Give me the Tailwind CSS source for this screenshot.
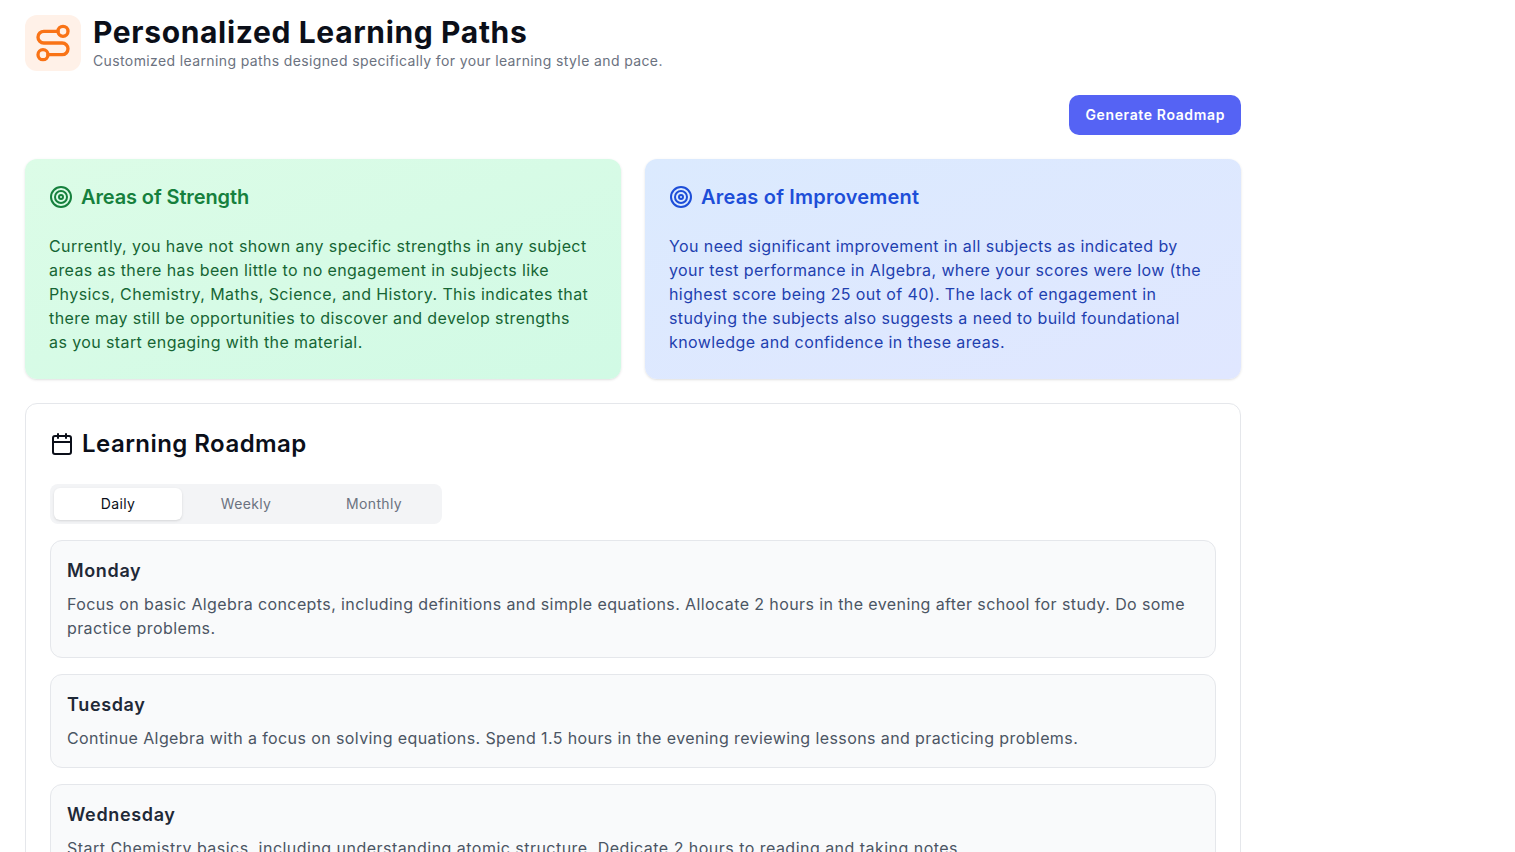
<!DOCTYPE html>
<html lang="en">
<head>
    <meta charset="utf-8">
    <title>Personalized Learning Paths</title>
    <script src="https://cdn.jsdelivr.net/npm/@tailwindcss/browser@4"></script>
</head>
<body class="bg-white h-[852px] overflow-hidden font-['Inter','Open_Sans',sans-serif]">
    <main class="w-[1266px] px-[25px] pt-[15px]">
        <header class="flex items-center gap-3">
            <div class="w-14 h-14 rounded-xl bg-[#fff1e8] flex items-center justify-center text-[#f97316]">
                <svg class="w-10 h-10" viewBox="0 0 24 24" fill="none" stroke="currentColor" stroke-width="2" stroke-linecap="round" stroke-linejoin="round"><circle cx="6" cy="19" r="3"/><path d="M9 19h8.5a3.5 3.5 0 0 0 0-7h-11a3.5 3.5 0 0 1 0-7H15"/><circle cx="18" cy="5" r="3"/></svg>
            </div>
            <div>
                <h1 class="text-[30px] leading-9 font-bold tracking-[0.65px] text-[#0b0f19] -mt-px">Personalized Learning Paths</h1>
                <p class="text-sm leading-5 tracking-[0.38px] text-[#6b7280] mt-px">Customized learning paths designed specifically for your learning style and pace.</p>
            </div>
        </header>

        <div class="flex justify-end mt-6">
            <button class="h-10 px-4 rounded-[10px] bg-[#5563f4] text-white text-sm font-semibold tracking-[0.63px]">Generate Roadmap</button>
        </div>

        <section class="grid grid-cols-2 gap-6 mt-6">
            <div class="h-[220px] rounded-xl bg-linear-to-br from-[#dcfce7] to-[#d1fae5] p-6 shadow-sm">
                <h2 class="flex items-center gap-2 h-7 mb-[23px] text-xl font-semibold tracking-[-0.12px] text-[#15803d]">
                    <svg class="w-6 h-6" viewBox="0 0 24 24" fill="none" stroke="currentColor" stroke-width="2" stroke-linecap="round" stroke-linejoin="round"><circle cx="12" cy="12" r="10"/><circle cx="12" cy="12" r="6"/><circle cx="12" cy="12" r="2"/></svg>
                    Areas of Strength
                </h2>
                <p class="max-w-[541px] text-[#166534] leading-6 tracking-[0.4px]">Currently, you have not shown any specific strengths in any subject areas as there has been little to no engagement in subjects like Physics, Chemistry, Maths, Science, and History. This indicates that there may still be opportunities to discover and develop strengths as you start engaging with the material.</p>
            </div>
            <div class="h-[220px] rounded-xl bg-linear-to-br from-[#dbeafe] to-[#e0e7ff] p-6 shadow-sm">
                <h2 class="flex items-center gap-2 h-7 mb-[23px] text-xl font-semibold tracking-[0.2px] text-[#1d4ed8]">
                    <svg class="w-6 h-6" viewBox="0 0 24 24" fill="none" stroke="currentColor" stroke-width="2" stroke-linecap="round" stroke-linejoin="round"><circle cx="12" cy="12" r="10"/><circle cx="12" cy="12" r="6"/><circle cx="12" cy="12" r="2"/></svg>
                    Areas of Improvement
                </h2>
                <p class="text-[#1e40af] leading-6 tracking-[0.4px]">You need significant improvement in all subjects as indicated by your test performance in Algebra, where your scores were low (the highest score being 25 out of 40). The lack of engagement in studying the subjects also suggests a need to build foundational knowledge and confidence in these areas.</p>
            </div>
        </section>

        <section class="mt-6 rounded-xl border border-[#e5e7eb] bg-white px-6 pt-6 pb-6">
            <h2 class="flex items-center gap-2 h-8 text-2xl font-semibold tracking-[0.45px] text-[#0b0f19]">
                <svg class="w-6 h-6" viewBox="0 0 24 24" fill="none" stroke="currentColor" stroke-width="2" stroke-linecap="round" stroke-linejoin="round"><path d="M8 2v4"/><path d="M16 2v4"/><rect x="3" y="4" width="18" height="18" rx="2"/><path d="M3 10h18"/></svg>
                Learning Roadmap
            </h2>
            <div class="mt-6 w-[392px] h-10 rounded-lg bg-[#f3f4f6] p-1 grid grid-cols-3 text-sm font-normal tracking-[0.35px] text-[#6b7280]">
                <div class="rounded-md bg-white shadow-sm text-[#0b0f19] flex items-center justify-center">Daily</div>
                <div class="flex items-center justify-center">Weekly</div>
                <div class="flex items-center justify-center">Monthly</div>
            </div>
            <div class="mt-4 flex flex-col gap-4">
                <article class="rounded-xl border border-[#e5e7eb] bg-[#f9fafb] px-4 pt-4 pb-[17px]">
                    <h3 class="text-lg leading-7 font-semibold tracking-[0.65px] text-[#1f2937] mb-[7px]">Monday</h3>
                    <p class="leading-6 tracking-[0.4px] text-[#4b5563]">Focus on basic Algebra concepts, including definitions and simple equations. Allocate 2 hours in the evening after school for study. Do some practice problems.</p>
                </article>
                <article class="rounded-xl border border-[#e5e7eb] bg-[#f9fafb] px-4 pt-4 pb-[17px]">
                    <h3 class="text-lg leading-7 font-semibold tracking-[0.65px] text-[#1f2937] mb-[7px]">Tuesday</h3>
                    <p class="leading-6 tracking-[0.4px] text-[#4b5563]">Continue Algebra with a focus on solving equations. Spend 1.5 hours in the evening reviewing lessons and practicing problems.</p>
                </article>
                <article class="rounded-xl border border-[#e5e7eb] bg-[#f9fafb] px-4 pt-4 pb-[17px]">
                    <h3 class="text-lg leading-7 font-semibold tracking-[0.65px] text-[#1f2937] mb-[7px]">Wednesday</h3>
                    <p class="leading-6 tracking-[0.47px] text-[#4b5563]">Start Chemistry basics, including understanding atomic structure. Dedicate 2 hours to reading and taking notes.</p>
                </article>
            </div>
        </section>
    </main>
</body>
</html>
